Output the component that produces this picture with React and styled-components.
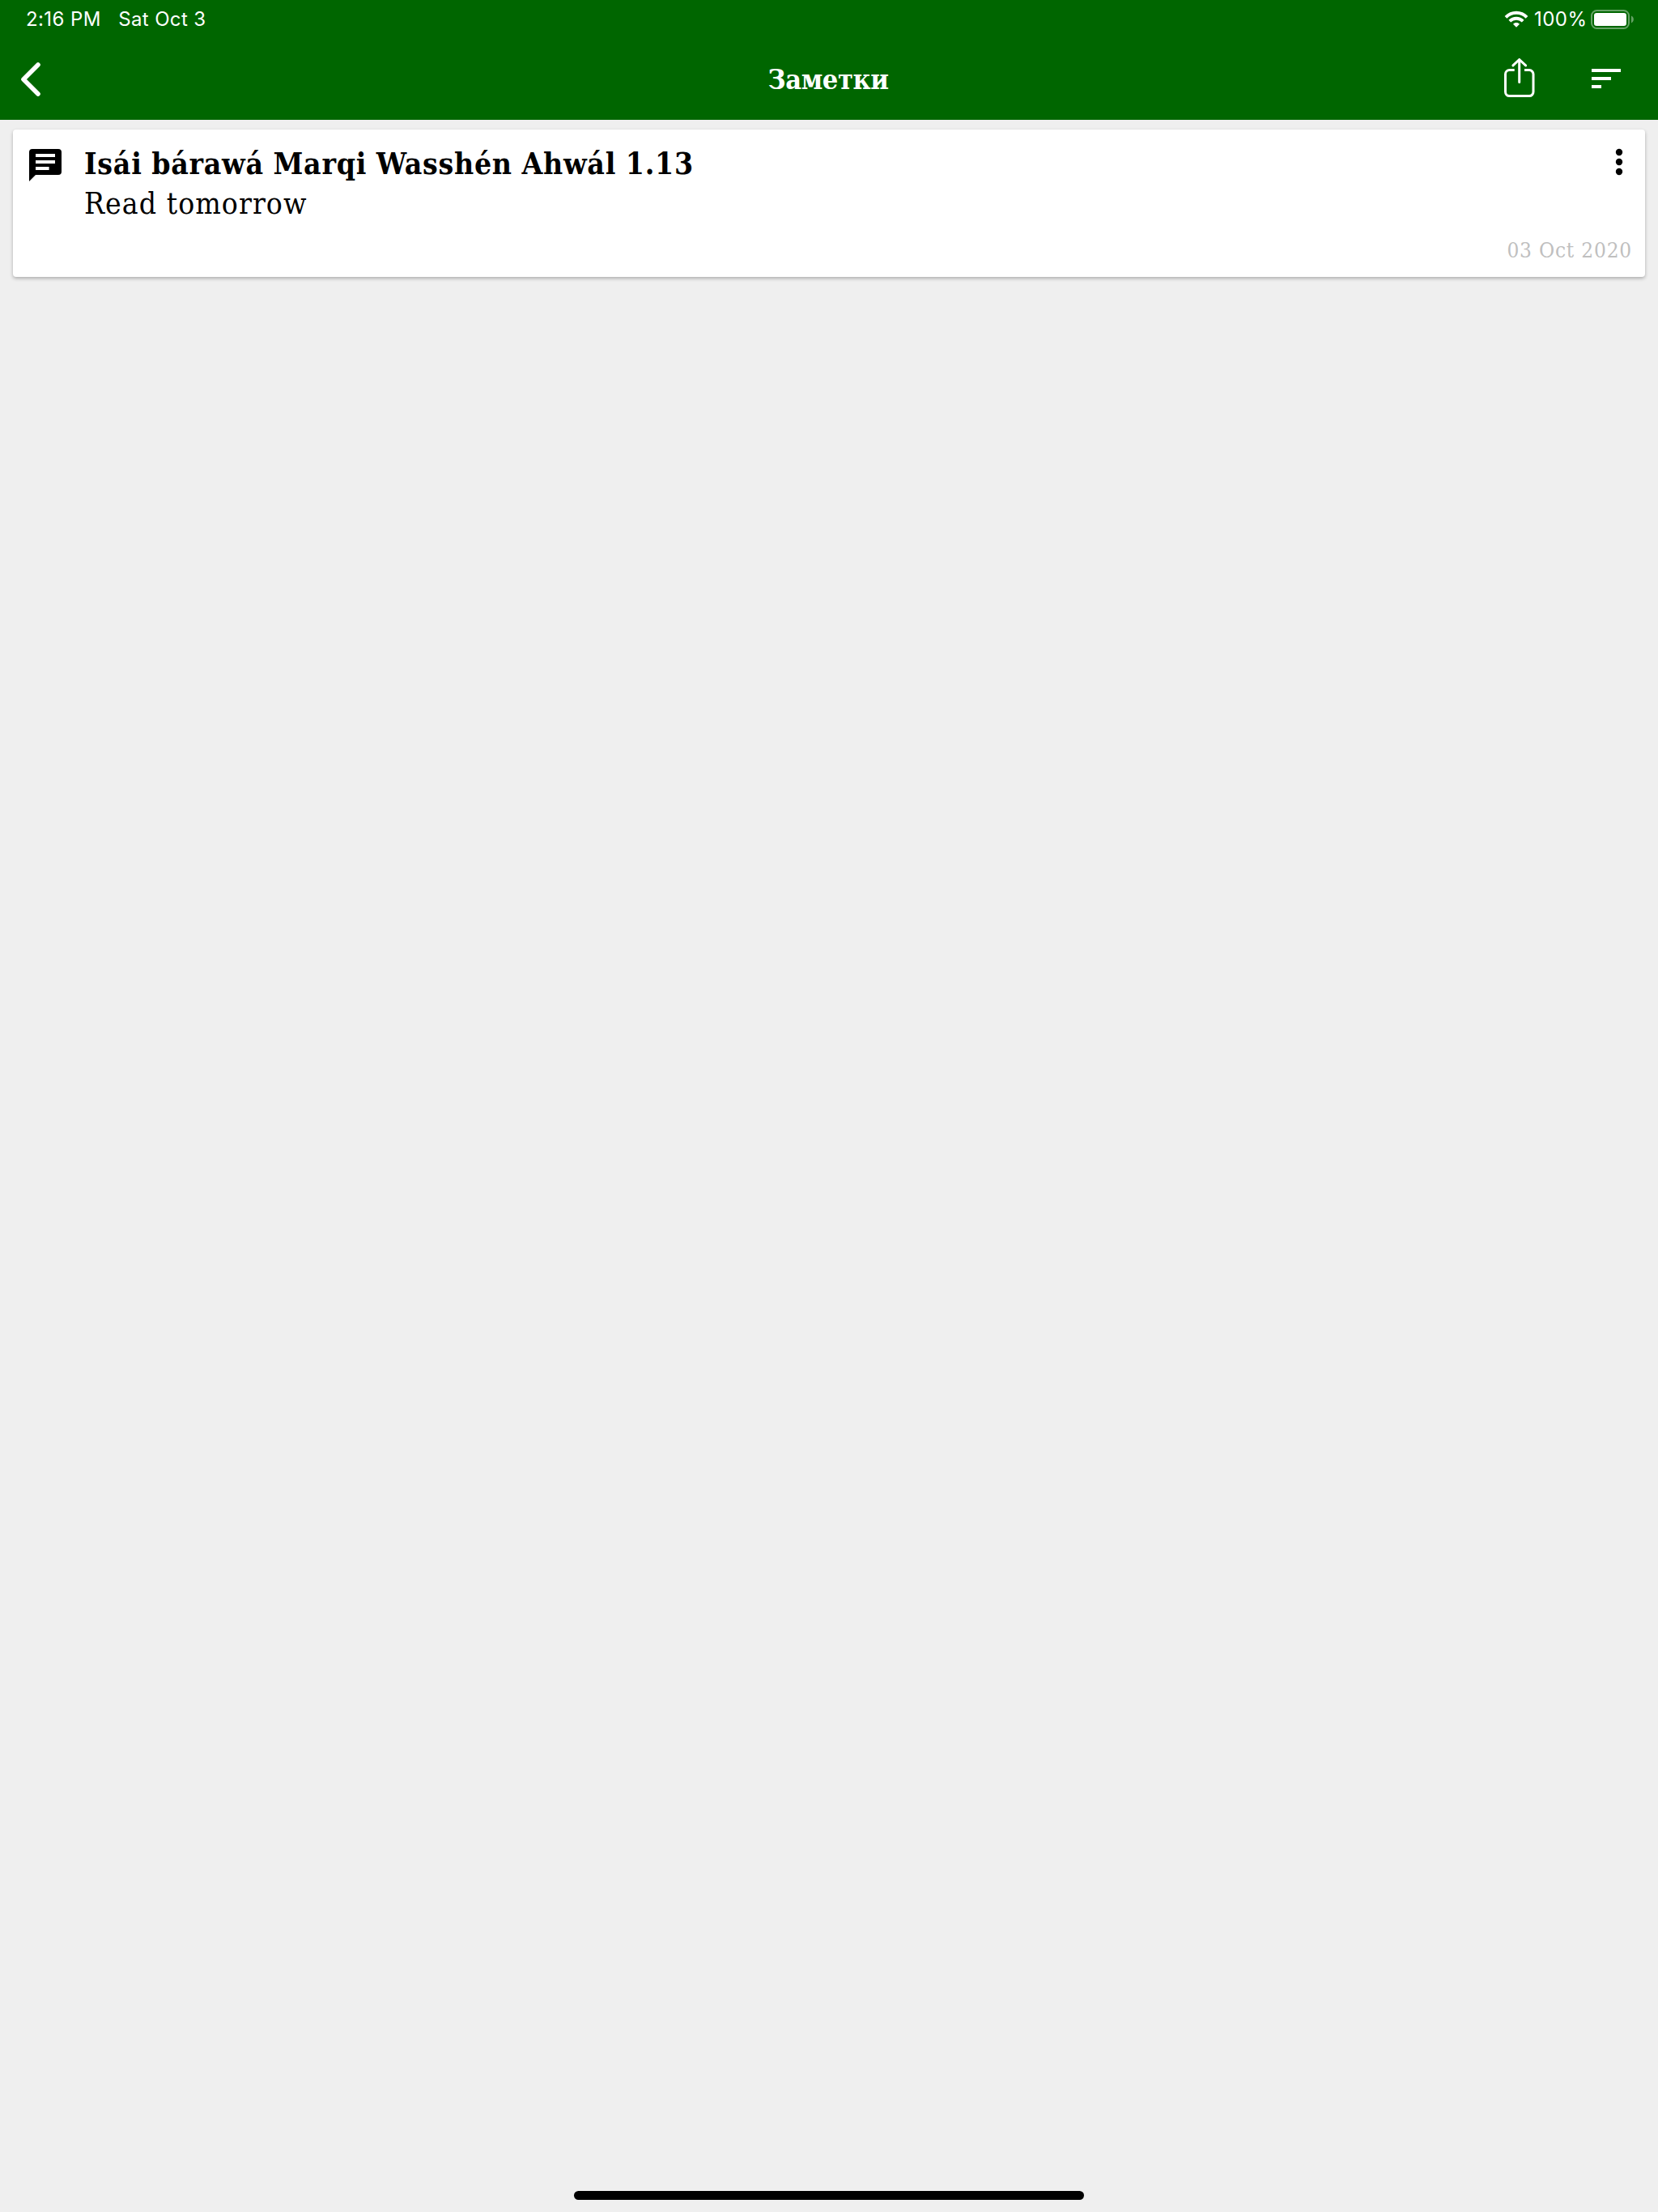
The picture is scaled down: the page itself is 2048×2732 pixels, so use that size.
import React from "react";
import styled, { createGlobalStyle } from "styled-components";

const GlobalStyle = createGlobalStyle`
  html, body { margin: 0; padding: 0; background: #efefef; }
  * { box-sizing: border-box; }
  svg { display: block; flex: none; }
`;

const serif = `"DejaVu Serif Condensed", "DejaVu Serif", serif`;

const Screen = styled.div`
  width: 2048px;
  height: 2732px;
  display: flex;
  flex-direction: column;
  background: #efefef;
  overflow: hidden;
`;

const Header = styled.header`
  height: 148px;
  flex: none;
  background: #006600;
  color: #fff;
`;

const StatusBar = styled.div`
  height: 48px;
  display: flex;
  justify-content: space-between;
  padding: 0 29px 0 32px;
  font-family: Inter, "Liberation Sans", sans-serif;
  font-size: 24px;
  line-height: 48px;
`;

const StatusGroup = styled.div`
  display: flex;
  align-items: center;
  height: 48px;
`;

const StatusText = styled.span`
  white-space: nowrap;
  letter-spacing: ${(p) => p.$spacing || 0}px;
  margin-left: ${(p) => p.$gap || 0}px;
`;

const NavBar = styled.div`
  height: 100px;
  display: grid;
  grid-template-columns: 300px 1fr 300px;
  align-items: center;
`;

const NavTitle = styled.h1`
  margin: 0;
  padding-right: 2px;
  text-align: center;
  font-family: ${serif};
  font-stretch: condensed;
  font-size: 34px;
  font-weight: 700;
  line-height: 48px;
  letter-spacing: ${(p) => p.$spacing}px;
  white-space: nowrap;
`;

const NavButton = styled.button`
  display: flex;
  padding: 0;
  border: 0;
  background: none;
  color: inherit;
`;

const NavActions = styled.div`
  display: flex;
  justify-content: flex-end;
  align-items: center;
  gap: 60px;
  padding-right: 40px;
`;

const List = styled.main`
  flex: 1;
  padding: 12px 16px;
`;

const Card = styled.article`
  height: 182px;
  display: flex;
  padding: 16px 16px 0 16px;
  background: #fff;
  border-radius: 4px;
  box-shadow: 0 2px 4px rgba(0, 0, 0, 0.28);
  color: #000;
  font-family: ${serif};
  font-stretch: condensed;
`;

const NoteIcon = styled.div`
  width: 72px;
  flex: none;
  padding-top: 4px;
`;

const NoteBody = styled.div`
  flex: 1;
  padding-top: 1px;
`;

const NoteLine = styled.div`
  font-size: 37px;
  line-height: 50px;
  font-weight: ${(p) => (p.$bold ? 700 : 400)};
  letter-spacing: ${(p) => p.$spacing}px;
  word-spacing: ${(p) => p.$words || 0}px;
  white-space: nowrap;
`;

const NoteAside = styled.div`
  display: flex;
  flex-direction: column;
  justify-content: space-between;
  align-items: flex-end;
  padding-bottom: 14px;
`;

const MoreButton = styled(NavButton)`
  margin-right: -8px;
`;

const NoteDate = styled.time`
  font-size: 26px;
  line-height: 38px;
  color: #bfbfbf;
  letter-spacing: ${(p) => p.$spacing}px;
  white-space: nowrap;
`;

const Footer = styled.footer`
  display: flex;
  justify-content: center;
  padding-bottom: 15px;
`;

const HomeIndicator = styled.div`
  width: 630px;
  height: 11px;
  border-radius: 5.5px;
  background: #000;
`;

const WifiIcon = () => (
  <svg width="30" height="22" viewBox="0 0 30 22" fill="none" stroke="#fff">
    <path d="M2 8.3C9.2.9 20.8.9 28 8.3" strokeWidth="3.9" />
    <path d="M6.8 13.1c4.6-4.5 11.8-4.5 16.4 0" strokeWidth="3.9" />
    <path d="M15 20.8l-4-4.1c2.1-2.1 5.9-2.1 8 0z" fill="#fff" stroke="none" />
  </svg>
);

const BatteryIcon = () => (
  <svg width="54" height="24" viewBox="0 0 54 24">
    <rect x="1" y="1" width="46" height="22" rx="6.5" fill="none" stroke="#fff" strokeOpacity=".4" strokeWidth="2" />
    <rect x="4" y="4" width="40" height="16" rx="3.2" fill="#fff" />
    <path d="M50 7.6c3.8 1.4 3.8 7.4 0 8.8z" fill="#fff" fillOpacity=".4" />
  </svg>
);

const BackIcon = () => (
  <svg width="60" height="48" viewBox="0 0 60 48" fill="none" stroke="#fff" strokeWidth="5.6" strokeLinecap="round" strokeLinejoin="round">
    <path d="M47 6L29 24l18 18" />
  </svg>
);

const ShareIcon = () => (
  <svg width="48" height="60" viewBox="0 0 48 60" fill="none" stroke="#fff" strokeWidth="3" strokeLinecap="round" strokeLinejoin="round">
    <path d="M18.7 18.6h-6.2a5 5 0 0 0-5 5v22a5 5 0 0 0 5 5H37a5 5 0 0 0 5-5v-22a5 5 0 0 0-5-5h-6" strokeLinecap="butt" />
    <path d="M24.7 33.5v-28M16.9 12.9l7.8-7.4 7.9 7.4" />
  </svg>
);

const SortIcon = () => (
  <svg width="48" height="48" viewBox="0 0 24 24" fill="#fff">
    <path d="M3 5.5h18v2H3zM3 10.5h12v2H3zM3 15.5h6v2H3z" />
  </svg>
);

const CommentIcon = () => (
  <svg width="48" height="48" viewBox="0 0 24 24">
    <path fillRule="evenodd" d="M4 2h16a2 2 0 0 1 2 2v12a2 2 0 0 1-2 2H6l-4 4V4a2 2 0 0 1 2-2zM6 5v2h12V5zM6 9v2h12V9zM6 13v2h8.3v-2z" />
  </svg>
);

const MoreIcon = () => (
  <svg width="48" height="48" viewBox="0 0 24 24">
    <circle cx="12" cy="6" r="2.1" />
    <circle cx="12" cy="12" r="2.1" />
    <circle cx="12" cy="18" r="2.1" />
  </svg>
);

export default function App() {
  return (
    <Screen>
      <GlobalStyle />
      <Header>
        <StatusBar>
          <StatusGroup>
            <StatusText $spacing={0.4}>2:16 PM</StatusText>
            <StatusText $gap={21.5} $spacing={0.35}>Sat Oct 3</StatusText>
          </StatusGroup>
          <StatusGroup>
            <WifiIcon />
            <StatusText $gap={7} $spacing={0.5}>100%</StatusText>
            <StatusText $gap={4.5}><BatteryIcon /></StatusText>
          </StatusGroup>
        </StatusBar>
        <NavBar>
          <NavButton aria-label="Back"><BackIcon /></NavButton>
          <NavTitle $spacing={-0.4}>Заметки</NavTitle>
          <NavActions>
            <NavButton aria-label="Share"><ShareIcon /></NavButton>
            <NavButton aria-label="Sort"><SortIcon /></NavButton>
          </NavActions>
        </NavBar>
      </Header>
      <List>
        <Card>
          <NoteIcon><CommentIcon /></NoteIcon>
          <NoteBody>
            <NoteLine $bold $spacing={0.75} $words={-0.7}>Isái bárawá Marqi Wasshén Ahwál 1.13</NoteLine>
            <NoteLine $spacing={1.05}>Read tomorrow</NoteLine>
          </NoteBody>
          <NoteAside>
            <MoreButton aria-label="More"><MoreIcon /></MoreButton>
            <NoteDate $spacing={0.8}>03 Oct 2020</NoteDate>
          </NoteAside>
        </Card>
      </List>
      <Footer><HomeIndicator /></Footer>
    </Screen>
  );
}
